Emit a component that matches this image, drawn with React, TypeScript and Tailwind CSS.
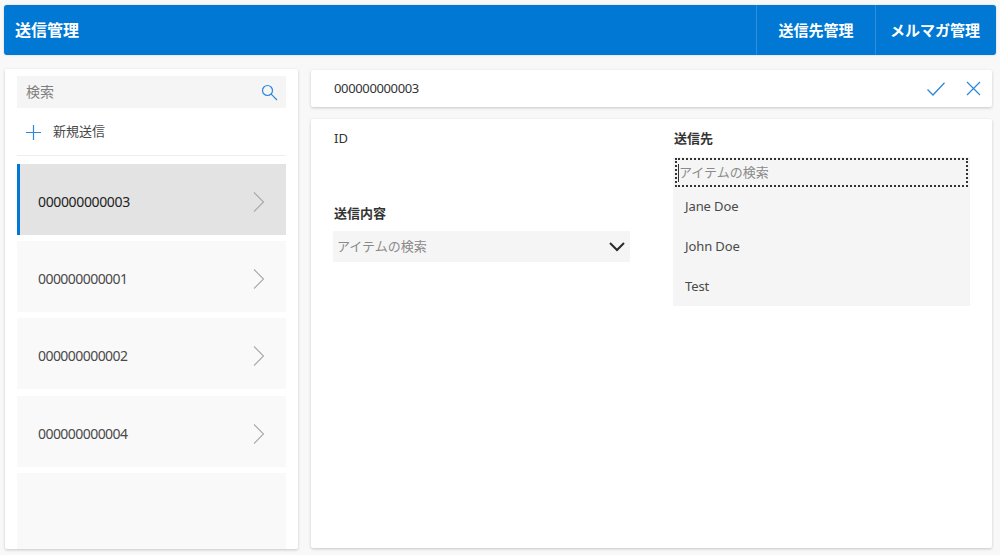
const font = "[font-family:'Noto_Sans','Noto_Sans_CJK_JP',sans-serif]";

function Chevron() {
  return (
    <svg width="14" height="22" viewBox="0 0 14 22" fill="none" stroke="#a8a8a8" strokeWidth="1.1" className="shrink-0">
      <path d="M2 1.5 L11.5 11 L2 20.5" />
    </svg>
  );
}

function ListItem({ label, active }: { label: string; active?: boolean }) {
  return (
    <div
      className={`flex items-center justify-between h-[71px] pt-[4px] pr-[20px] ${
        active ? "bg-[#e3e3e3] border-l-[3px] border-[#0078d4] pl-[18px] text-[#222222]" : "bg-[#f9f9f9] pl-[21px] text-[#4a4a4a]"
      }`}
    >
      <span className={`text-[14px] ${active ? "tracking-[-0.36px]" : "tracking-[-0.55px]"}`}>{label}</span>
      <Chevron />
    </div>
  );
}

function Header() {
  return (
    <header className="flex items-stretch h-[50px] bg-[#0078d4] rounded-[3px] text-white font-bold shadow-[0_0_2px_rgba(0,0,0,0.2)]">
      <div className="flex-1 flex items-center pl-[11px] text-[16px]">送信管理</div>
      <div className="w-[119px] flex items-center justify-center border-l border-[#2b8fdc] text-[15px]">送信先管理</div>
      <div className="w-[121px] flex items-center justify-center border-l border-[#2b8fdc] pr-[2px] text-[15px]">メルマガ管理</div>
    </header>
  );
}

function Sidebar() {
  return (
    <aside className="w-[293px] ml-[1px] h-[480px] bg-white rounded-[2px] shadow-[0_1px_3px_rgba(0,0,0,0.2)] px-[12px] pt-[7px] overflow-hidden flex flex-col">
      <div className="h-[32px] bg-[#f5f5f5] flex items-center justify-between pl-[9px] pr-[8px] pb-[1px] shrink-0">
        <span className="text-[14px] text-[#7f7f7f]">検索</span>
        <svg width="17" height="17" viewBox="0 0 17 17" fill="none" stroke="#2b88d8" strokeWidth="1.2" className="mt-[1px]">
          <circle cx="6.5" cy="6.5" r="5" />
          <path d="M10.2 10.2 L16 16" />
        </svg>
      </div>
      <div className="h-[48px] flex items-center border-b border-[#eeeeee] pl-[9px] pt-[1px] shrink-0">
        <svg width="15" height="15" viewBox="0 0 15 15" fill="none" stroke="#2b88d8" strokeWidth="1.2">
          <path d="M7.5 0 V15 M0 7.5 H15" />
        </svg>
        <span className="ml-[12px] text-[13px] text-[#4a4a4a]">新規送信</span>
      </div>
      <div className="flex flex-col mt-[8px]">
        <ListItem label="000000000003" active />
        <div className="h-[6px] shrink-0" />
        <ListItem label="000000000001" />
        <div className="h-[6px] shrink-0" />
        <ListItem label="000000000002" />
        <div className="h-[7px] shrink-0" />
        <ListItem label="000000000004" />
        <div className="h-[6px] shrink-0" />
        <div className="h-[80px] bg-[#f9f9f9] shrink-0" />
      </div>
    </aside>
  );
}

function Detail() {
  return (
    <main className="flex-1 flex flex-col ml-[13px] mr-[8px] mt-[1px] gap-[12px]">
      <div className="h-[37px] bg-white rounded-[2px] shadow-[0_1px_3px_rgba(0,0,0,0.2)] flex items-center justify-between pl-[23px] pr-[11px]">
        <span className="text-[13px] tracking-[-0.36px] text-[#333333]">000000000003</span>
        <div className="flex items-center gap-[21px]">
          <svg width="18" height="14" viewBox="0 0 18 14" fill="none" stroke="#2b88d8" strokeWidth="1.3">
            <path d="M0.5 7.5 L6 13 L17.5 0.8" />
          </svg>
          <svg width="15" height="15" viewBox="0 0 15 15" fill="none" stroke="#2b88d8" strokeWidth="1.2">
            <path d="M1 1 L14 14 M14 1 L1 14" />
          </svg>
        </div>
      </div>
      <div className="h-[429px] bg-white rounded-[2px] shadow-[0_1px_3px_rgba(0,0,0,0.2)] flex pl-[22px] pt-[9px]">
        <div className="w-[297px] flex flex-col">
          <div className="h-[20px] pl-[1px] text-[13px] leading-[20px] text-[#333333]">ID</div>
          <div className="mt-[55px] h-[20px] pl-[1px] text-[13px] leading-[20px] font-bold text-[#333333]">送信内容</div>
          <div className="mt-[8px] h-[31px] bg-[#f5f5f5] flex items-center justify-between pl-[4px] pr-[5px]">
            <span className="text-[13px] text-[#8a8a8a]">アイテムの検索</span>
            <svg width="16" height="10" viewBox="0 0 16 10" fill="none" stroke="#2a2a2a" strokeWidth="2">
              <path d="M1 1 L8 8 L15 1" />
            </svg>
          </div>
        </div>
        <div className="w-[297px] ml-[43px] flex flex-col">
          <div className="h-[20px] pl-[1px] text-[13px] leading-[20px] font-bold text-[#333333]">送信先</div>
          <div className="mt-[9px] bg-[#f5f5f5] h-[149px] flex flex-col">
            <div className="h-[29px] mx-[2px] mt-[1px] border-[2px] border-dotted border-[#333333] flex items-center shrink-0">
              <span className="h-[18px] w-px ml-[1px] bg-[#333333]" />
              <span className="text-[13px] text-[#8a8a8a]">アイテムの検索</span>
            </div>
            <div className="h-[40px] flex items-center pl-[12px] text-[13px] tracking-[-0.1px] text-[#4a4a4a]">Jane Doe</div>
            <div className="h-[40px] flex items-center pl-[12px] text-[13px] tracking-[-0.1px] text-[#4a4a4a]">John Doe</div>
            <div className="h-[39px] flex items-center pl-[12px] text-[13px] tracking-[-0.1px] text-[#4a4a4a]">Test</div>
          </div>
        </div>
      </div>
    </main>
  );
}

export default function App() {
  return (
    <div className={`h-[555px] w-full overflow-hidden bg-[#f8f8f8] pt-[5px] px-[4px] ${font}`}>
      <Header />
      <div className="flex items-start mt-[14px] -mr-[4px]">
        <Sidebar />
        <Detail />
      </div>
    </div>
  );
}
